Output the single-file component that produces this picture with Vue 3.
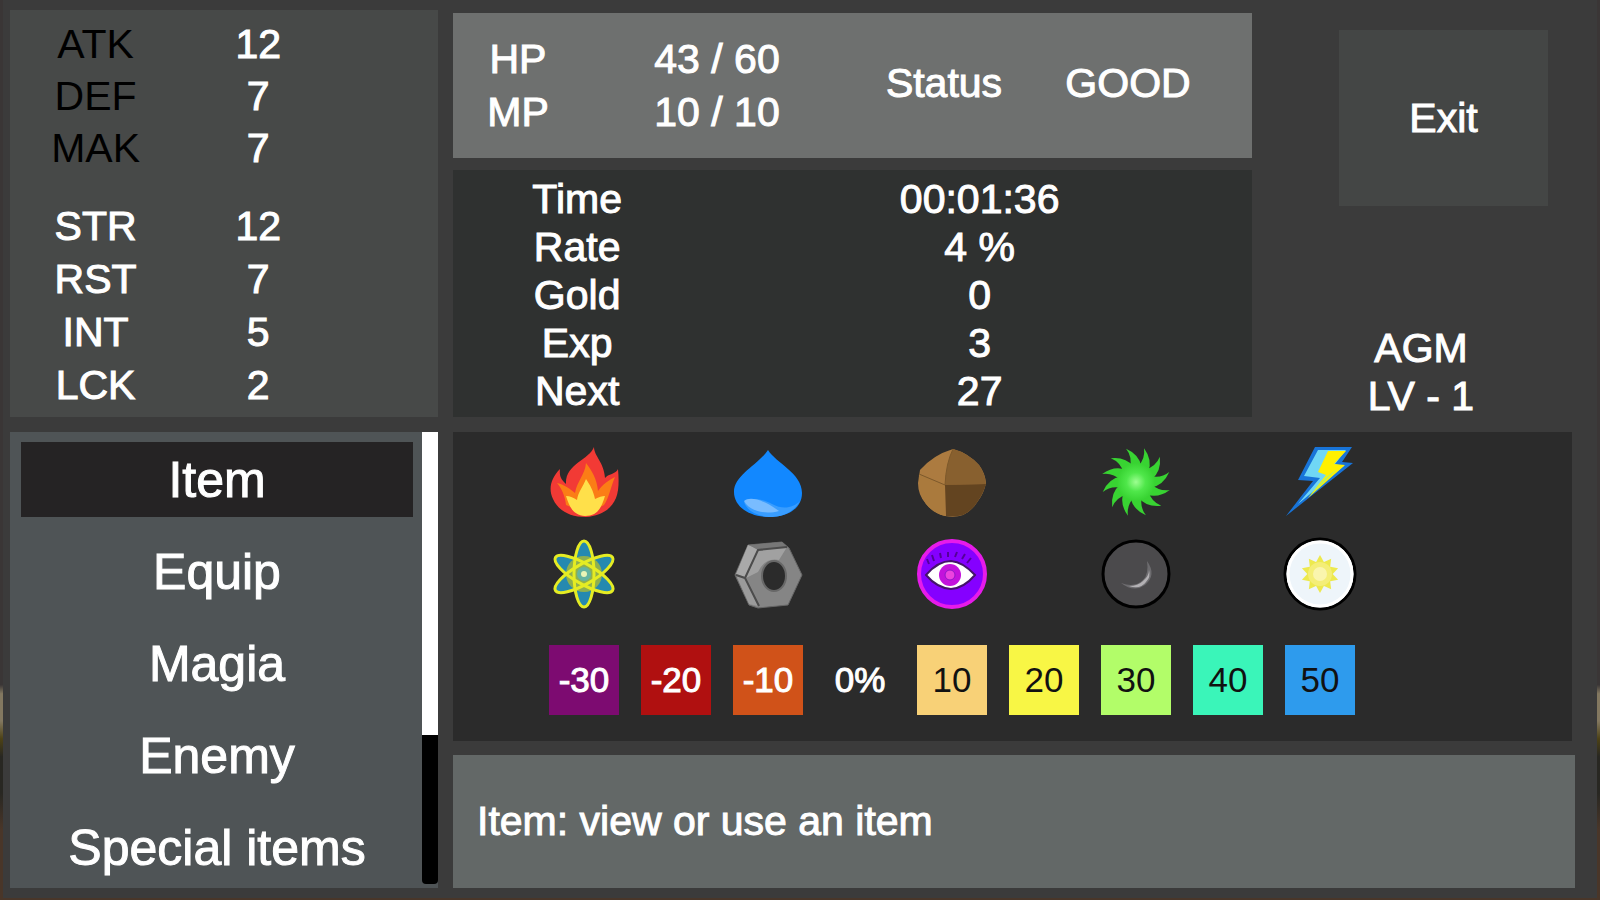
<template>
  <div class="scene">
    <main class="menu-screen">
      <section class="panel stats">
        <dl class="stat-group derived">
          <template v-for="s in derivedStats" :key="s.label">
            <dt>{{ s.label }}</dt>
            <dd>{{ s.value }}</dd>
          </template>
        </dl>
        <dl class="stat-group base">
          <template v-for="s in baseStats" :key="s.label">
            <dt>{{ s.label }}</dt>
            <dd>{{ s.value }}</dd>
          </template>
        </dl>
      </section>

      <div class="top-right">
        <div class="center-column">
          <section class="panel vitals">
            <div class="vital-labels"><span>HP</span><span>MP</span></div>
            <div class="vital-values">
              <span>{{ hp.now }} / {{ hp.max }}</span>
              <span>{{ mp.now }} / {{ mp.max }}</span>
            </div>
            <span class="status">Status</span>
            <span class="status">{{ status }}</span>
          </section>

          <dl class="panel progress">
            <template v-for="p in progress" :key="p.label">
              <dt>{{ p.label }}</dt>
              <dd>{{ p.value }}</dd>
            </template>
          </dl>
        </div>

        <div class="side-column">
          <button class="exit-btn" type="button">Exit</button>
          <div class="hero">
            <span>AGM</span>
            <span>LV - 1</span>
          </div>
        </div>
      </div>

      <nav class="panel menu">
        <div class="menu-list">
          <button
            v-for="item in menuItems"
            :key="item.name"
            type="button"
            :class="{ active: selected.name === item.name }"
            @click="selected = item"
          >
            {{ item.name }}
          </button>
        </div>
        <div class="scroll-track">
          <div class="scroll-thumb" :style="{ height: thumbSize + '%' }"></div>
        </div>
      </nav>

      <div class="bottom-right">
        <section class="panel elements">
          <div class="icon-grid">
            <!-- fire -->
            <svg viewBox="0 0 70 70">
              <path d="M45 0C45 9 55 15 56 31C59 27 67 27 69 22C70 33 70 43 67 51C62 63 51 69 37 70C20 70 9 63 4 52C-1 42 2 31 11 22C10 30 13 33 17 37C16 17 40 13 45 0Z" fill="#f23a35" />
              <path d="M37 16C43 24 48 32 49 44C54 37 60 33 66 30C62 39 60 51 55 58L38 67L17 58C16 49 13 42 8 36C16 38 21 42 26 46C28 34 36 28 37 16Z" fill="#fb7d16" />
              <path d="M37 32C41 38 44 43 46 52C50 50 53 49 56 49C52 62 48 69 36 69C25 68 21 62 17 49C21 49 25 51 28 53C29 45 34 40 37 32Z" fill="#ffe04a" />
            </svg>
            <!-- water -->
            <svg viewBox="0 0 70 70">
              <path d="M35 3C43 16 69 26 69 46C69 62 54 70 36 70C17 70 1 60 1 45C1 28 25 18 35 3Z" fill="#1288ff" />
              <path d="M11 55C19 50 30 52 39 57C50 63 60 61 67 54C60 66 49 70 36 70C24 69 14 64 11 55Z" fill="#399dff" />
              <path d="M11 54C17 49 31 53 46 64C32 68 16 64 11 54Z" fill="#79bcff" />
            </svg>
            <!-- earth -->
            <svg viewBox="0 0 70 70">
              <path d="M36 2Q51 6 62 18Q68 26 69 36Q67 46 61 54Q55 64 46 68Q38 71 28 69Q16 66 9 57Q1 48 1 36L3 23Q16 8 36 2Z" fill="#ac7b40" />
              <path d="M36 2Q51 6 62 18Q68 26 69 37L28 38Q29 16 36 2Z" fill="#88602f" />
              <path d="M28 38L69 37Q66 47 61 54Q55 64 46 68Q39 70 29 69Z" fill="#634420" />
              <path d="M2 27L28 38L28 69Q16 66 9 57Q1 47 2 27Z" fill="#aa7a3d" />
              <path d="M2 27L28 38Q29 16 36 2" fill="none" stroke="#7d592b" stroke-width="1" />
            </svg>
            <!-- wind -->
            <svg viewBox="0 0 70 70">
              <defs>
                <radialGradient id="wind">
                  <stop offset="0" stop-color="#9dff91" />
                  <stop offset="0.5" stop-color="#4fe74a" />
                  <stop offset="1" stop-color="#38d332" />
                </radialGradient>
              </defs>
              <g transform="translate(35 35)">
                <path
                  v-for="n in 12"
                  :key="n"
                  d="M7 -14Q6 -27 -7 -34Q-1 -25 -5 -14Z"
                  fill="#38d332"
                  :transform="`rotate(${n * 30 - 5})`"
                />
                <circle r="19" fill="url(#wind)" />
              </g>
            </svg>
            <!-- thunder -->
            <svg viewBox="0 0 70 70">
              <path d="M30 0H67L57 15L68 16L1 69L28 34L13 33Z" fill="#1874d8" />
              <path d="M33 3H61L50 17L59 19L13 57L35 31L19 29Z" fill="#70d7f5" />
              <path d="M43 4H61L49 17L60 18L23 51L41 28L33 25Z" fill="#fff000" />
              <path d="M52 22L24 50L40 31Z" fill="#b9ef60" />
            </svg>
            <!-- atom -->
            <svg viewBox="0 0 70 70">
              <g fill="#2589b0">
                <ellipse v-for="a in [0, 60, 120]" :key="a" cx="35" cy="35" rx="11" ry="34" :transform="`rotate(${a} 35 35)`" />
              </g>
              <circle cx="35" cy="35" r="18" fill="#8fb04e" />
              <g fill="none" stroke="#e5ec23" stroke-width="3">
                <ellipse v-for="a in [0, 60, 120]" :key="a" cx="35" cy="35" rx="10" ry="33" :transform="`rotate(${a} 35 35)`" />
              </g>
              <circle cx="35" cy="35" r="7" fill="#64b4a1" />
              <circle cx="35" cy="35" r="3" fill="#e9f5b7" />
            </svg>
            <!-- metal -->
            <svg viewBox="0 0 70 70">
              <path d="M15 6L49 3L56 9L69 36L55 66L25 69L16 66L2 36Z" fill="#858585" stroke="#666" />
              <path d="M15 6L25 10L12 38L3 35Z" fill="#a9a9a9" />
              <path d="M3 36L12 40L25 67L16 65Z" fill="#9b9b9b" />
              <path d="M16 6L49 3L54 8L25 11Z" fill="#777" />
              <path d="M25 11L54 8L46 21Q32 18 25 33L13 39Z" fill="#a1a1a1" />
              <path d="M54 8L25 11L12 39L26 67M3 36L12 39" fill="none" stroke="#4c4c4c" stroke-width="2" />
              <ellipse cx="41" cy="37" rx="12" ry="15" fill="#2b2b2b" stroke="#686868" stroke-width="2" />
            </svg>
            <!-- mind -->
            <svg viewBox="0 0 70 70">
              <circle cx="35" cy="35" r="33" fill="#8500ff" stroke="#e61bea" stroke-width="4" />
              <path d="M12 25L10 20M17 22L15 16M24 19L23 14M31 18V13M38 18L40 13M45 20L48 15M50 24L54 19" stroke="#540099" stroke-width="2" />
              <path d="M9 36Q21 22 34 22Q46 23 58 36Q47 49 34 50Q20 49 9 36Z" fill="#fff" stroke="#45136b" stroke-width="2" />
              <circle cx="33" cy="36" r="11" fill="#c312dc" />
              <circle cx="33" cy="36" r="5" fill="#ed42df" stroke="#8d18c8" />
            </svg>
            <!-- dark -->
            <svg viewBox="0 0 70 70">
              <circle cx="35" cy="35" r="33" fill="#4b4a4c" stroke="#000" stroke-width="3" />
              <path d="M46 22Q56 36 44 46Q33 54 20 44Q34 49 42 41Q48 35 46 22Z" fill="#6d6c6f" />
              <path d="M48 31Q48 37 42 42Q37 47 28 47Q39 51 45 43Q50 38 48 31Z" fill="#b3b1b4" />
            </svg>
            <!-- light -->
            <svg viewBox="0 0 70 70">
              <circle cx="35" cy="35" r="35" fill="#f4f9fc" stroke="#000" stroke-width="3" />
              <circle cx="35" cy="35" r="32" fill="#eef5fa" stroke="#fff" stroke-width="3" />
              <g transform="translate(35 35)">
                <path v-for="n in 10" :key="n" d="M-5 -10L0 -19L5 -10Z" fill="#ede94e" :transform="`rotate(${n * 36})`" />
                <circle r="12" fill="#f4ee77" />
                <circle r="7" fill="#faf5ae" />
              </g>
            </svg>
          </div>
          <div class="swatches">
            <span v-for="r in resistances" :key="r.name" :class="['swatch', r.name, { positive: r.positive }]">{{ r.text }}</span>
          </div>
        </section>

        <p class="panel message">{{ selected.name }}: {{ selected.hint }}</p>
      </div>
    </main>
  </div>
</template>

<script setup>
import { ref } from 'vue';

const derivedStats = [
  { label: 'ATK', value: 12 },
  { label: 'DEF', value: 7 },
  { label: 'MAK', value: 7 }
];

const baseStats = [
  { label: 'STR', value: 12 },
  { label: 'RST', value: 7 },
  { label: 'INT', value: 5 },
  { label: 'LCK', value: 2 }
];

const hp = { now: 43, max: 60 };
const mp = { now: 10, max: 10 };
const status = 'GOOD';

const progress = [
  { label: 'Time', value: '00:01:36' },
  { label: 'Rate', value: '4 %' },
  { label: 'Gold', value: 0 },
  { label: 'Exp', value: 3 },
  { label: 'Next', value: 27 }
];

const menuItems = [
  { name: 'Item', hint: 'view or use an item' },
  { name: 'Equip', hint: 'change equipment' },
  { name: 'Magia', hint: 'view or use magic' },
  { name: 'Enemy', hint: 'view enemies' },
  { name: 'Special items', hint: 'view special items' }
];
const selected = ref(menuItems[0]);
const thumbSize = 67;

const resistances = [
  { name: 'minus30', text: '-30' },
  { name: 'minus20', text: '-20' },
  { name: 'minus10', text: '-10' },
  { name: 'zero', text: '0%' },
  { name: 'plus10', text: '10', positive: true },
  { name: 'plus20', text: '20', positive: true },
  { name: 'plus30', text: '30', positive: true },
  { name: 'plus40', text: '40', positive: true },
  { name: 'plus50', text: '50', positive: true }
];
</script>

<style>
body {
  margin: 0;
  background: #3b3b3b;
}
</style>

<style scoped>
.scene {
  box-sizing: border-box;
  min-height: 100vh;
  padding: 0 3px 3px;
  display: flex;
  background: linear-gradient(#3a3636 0 76%, #837860 77% 80%, #4d4216 82%, #282722 84% 88%, #493629 92%);
  font-family: "Liberation Sans", Arial, sans-serif;
  font-size: 41px;
  color: #fff;
  -webkit-text-stroke: 1px currentColor;
}

.menu-screen {
  flex: 1;
  display: grid;
  grid-template-columns: 428fr 1122fr;
  grid-template-rows: auto 1fr;
  gap: 15px;
  padding: 10px 22px 10px 7px;
  background: #3b3b3b;
}

.panel {
  margin: 0;
  box-sizing: border-box;
}

dt, dd { margin: 0; }

/* character stats */
.stats {
  background: #474948;
  padding: 8px 0 5px;
  display: flex;
  flex-direction: column;
  gap: 26px;
}
.stat-group {
  margin: 0;
  display: grid;
  grid-template-columns: 40% 36%;
  line-height: 52px;
  text-align: center;
}
.base { line-height: 53px; }
.derived dt {
  color: #000;
  -webkit-text-stroke: 0;
}

.top-right {
  display: grid;
  grid-template-columns: 799fr 323fr;
}
.center-column {
  display: flex;
  flex-direction: column;
  gap: 12px;
  padding-top: 3px;
}

.vitals {
  background: #6e706f;
  padding: 20px 0 19px;
  display: grid;
  grid-template-columns: 130fr 268fr 186fr 182fr 33fr;
  align-items: center;
  line-height: 53px;
  text-align: center;
}
.vital-labels, .vital-values, .hero {
  display: flex;
  flex-direction: column;
}
.status { padding-bottom: 5px; }

.progress {
  background: #2f3130;
  flex: 1;
  padding: 5px 0 2px;
  display: grid;
  grid-template-columns: 31fr 68fr;
  column-gap: 6px;
  line-height: 48px;
  text-align: center;
}

.side-column {
  display: flex;
  flex-direction: column;
  justify-content: space-between;
  padding: 20px 27px 0 87px;
}
.exit-btn {
  height: 176px;
  border: none;
  background: #444645;
  color: inherit;
  font: inherit;
  cursor: pointer;
}
.hero {
  align-self: center;
  gap: 6px;
  margin-right: 45px;
  line-height: 42px;
  text-align: center;
}

/* main menu */
.menu {
  background: #4f5456;
  display: flex;
  gap: 9px;
}
.menu-list {
  flex: 1;
  display: flex;
  flex-direction: column;
  gap: 17px;
  padding: 10px 0 3px 11px;
}
.menu-list button {
  height: 75px;
  padding: 0;
  border: none;
  background: none;
  color: inherit;
  font: inherit;
  font-size: 50px;
  cursor: pointer;
}
.menu-list button.active { background: #252324; }

.scroll-track {
  width: 16px;
  margin-bottom: 4px;
  border-radius: 0 0 4px 4px;
  background: #000;
}
.scroll-thumb { background: #fff; }

.bottom-right {
  display: flex;
  flex-direction: column;
  gap: 14px;
}

.elements {
  background: #2b2b2b;
  margin-right: 3px;
  padding: 15px 0 26px 96px;
  display: flex;
  flex-direction: column;
  gap: 36px;
}
.icon-grid {
  display: grid;
  grid-template-columns: repeat(5, 70px);
  gap: 22px 114px;
}
.icon-grid svg {
  width: 70px;
  height: 70px;
  display: block;
  overflow: visible;
}
.swatches {
  display: flex;
  gap: 22px;
}
.swatch {
  width: 70px;
  line-height: 70px;
  font-size: 35px;
  text-align: center;
}
.positive {
  color: #111;
  -webkit-text-stroke: 0;
}
.minus30 { background: #7d0b71; }
.minus20 { background: #b01010; }
.minus10 { background: #d05219; }
.plus10 { background: #f8d177; }
.plus20 { background: #f8f645; }
.plus30 { background: #b2fd69; }
.plus40 { background: #3af5b9; }
.plus50 { background: #2e9bed; }

.message {
  flex: 1;
  display: flex;
  align-items: center;
  padding: 0 24px;
  background: #636867;
}
</style>
